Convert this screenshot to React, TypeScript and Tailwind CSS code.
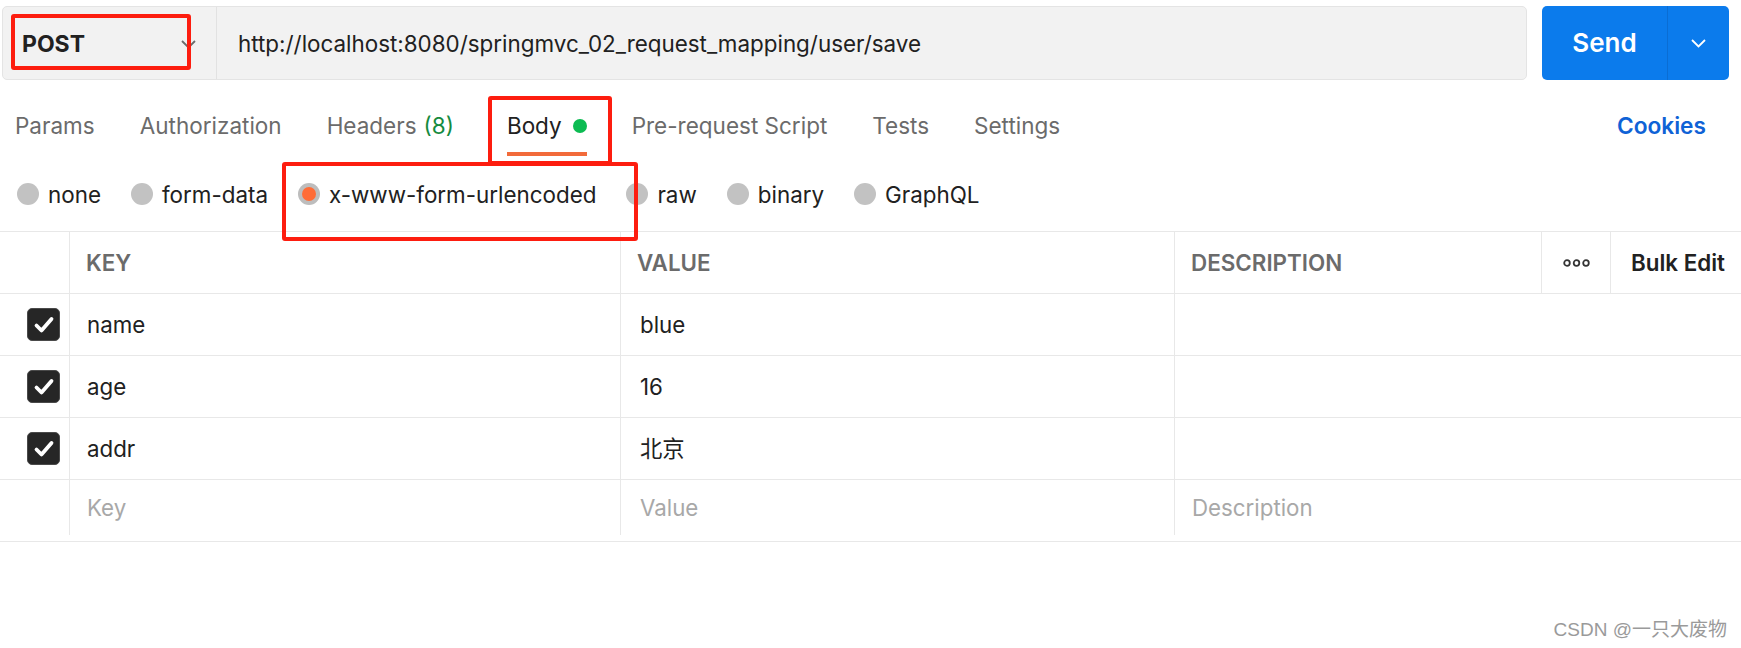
import React from "react";

const tabs = [
  { label: "Params" },
  { label: "Authorization" },
  { label: "Headers", count: "(8)" },
  { label: "Body", active: true },
  { label: "Pre-request Script" },
  { label: "Tests" },
  { label: "Settings" },
];

const bodyTypes = ["none", "form-data", "x-www-form-urlencoded", "raw", "binary", "GraphQL"];

const rows = [
  { key: "name", value: "blue" },
  { key: "age", value: "16" },
  { key: "addr", value: "北京" },
];

function Chevron({ color }: { color: string }) {
  return (
    <svg width="15" height="9" viewBox="0 0 15 9" fill="none">
      <polyline points="1,1 7.5,7.5 14,1" stroke={color} strokeWidth="1.8" />
    </svg>
  );
}

function Checkbox() {
  return (
    <div className="w-[33px] h-[33px] rounded-[5px] bg-[#262626] border border-[#4a4a4a] flex items-center justify-center">
      <svg width="24" height="24" viewBox="0 0 24 24" fill="none">
        <polyline points="4.5,12.5 9.5,17.5 19.5,6" stroke="white" strokeWidth="3.8" strokeLinecap="round" strokeLinejoin="round" />
      </svg>
    </div>
  );
}

function Dots() {
  return (
    <svg width="27" height="8" viewBox="0 0 27 8" fill="none">
      <circle cx="4" cy="4" r="2.8" stroke="#333" strokeWidth="1.8" />
      <circle cx="13.5" cy="4" r="2.8" stroke="#333" strokeWidth="1.8" />
      <circle cx="23" cy="4" r="2.8" stroke="#333" strokeWidth="1.8" />
    </svg>
  );
}

export default function App() {
  return (
    <div className="relative w-[1741px] h-[648px] bg-white overflow-hidden font-['Inter','Noto_Sans_CJK_SC',sans-serif] text-[#212121]">
      {/* request bar */}
      <div className="flex pl-[2px] pr-[12px] pt-[6px] gap-[15px]">
        <div className="flex-1 h-[74px] flex bg-[#f2f2f2] border border-[#e4e4e4] rounded-[5px]">
          <div className="w-[214px] h-full flex items-center justify-between pl-[19px] pr-[20px] pt-[2px] border-r border-[#e2e2e2]">
            <span className="text-[23px] font-bold text-[#212121]">POST</span>
            <Chevron color="#6b6b6b" />
          </div>
          <div className="flex items-center pl-[21px] pt-[2px] text-[22.4px] text-[#212121]">
            http://localhost:8080/springmvc_02_request_mapping/user/save
          </div>
        </div>
        <div className="w-[187px] h-[74px] flex rounded-[5px] bg-[#0b7bec] text-white">
          <div className="w-[126px] flex items-center justify-center pb-[2px] border-r border-[#0a6dd4] text-[26px] font-semibold">
            Send
          </div>
          <div className="flex-1 flex items-center justify-center">
            <Chevron color="white" />
          </div>
        </div>
      </div>

      {/* tabs */}
      <div className="flex items-start h-[80px] pt-[32px] pl-[15px] pr-[35px] gap-[45px]">
        {tabs.map((t) => (
          <div key={t.label} className={`flex flex-col ${t.active ? "ml-[8px]" : ""}`}>
            <div className={`flex items-center h-[28px] text-[22.5px] ${t.active ? "text-[#212121]" : "text-[#6b6b6b]"}`}>
              {t.label}
              {t.count && <span className="ml-[7px] text-[#158b3e]">{t.count}</span>}
              {t.active && <span className="ml-[11px] w-[14px] h-[14px] rounded-full bg-[#0cbb52]" />}
            </div>
            {t.active && <div className="mt-[12px] h-[4px] bg-[#f26b3a]" />}
          </div>
        ))}
        <div className="ml-auto h-[28px] flex items-center text-[22.7px] font-semibold text-[#0f62d6]">Cookies</div>
      </div>

      {/* body types */}
      <div className="h-[71px] pb-[2px] flex items-center pl-[17px] gap-[30px]">
        {bodyTypes.map((b) => {
          const selected = b === "x-www-form-urlencoded";
          return (
            <div key={b} className="flex items-center gap-[9px] text-[22.4px] text-[#212121]">
              {selected ? (
                <span className="w-[22px] h-[22px] rounded-full bg-[#bdbdbd] flex items-center justify-center">
                  <span className="w-[14px] h-[14px] rounded-full bg-[#ff6c37]" />
                </span>
              ) : (
                <span className="w-[22px] h-[22px] rounded-full bg-[#c2c2c2]" />
              )}
              {b}
            </div>
          );
        })}
      </div>

      {/* table */}
      <div className="border-t border-[#e8e8e8]">
        <div className="grid grid-cols-[69px_551px_554px_367px_69px_1fr] h-[62px] border-b border-[#e8e8e8] text-[22.4px] font-semibold text-[#6b6b6b]">
          <div />
          <div className="flex items-center pl-[16px] border-l border-[#e8e8e8]">KEY</div>
          <div className="flex items-center pl-[16px] border-l border-[#e8e8e8]">VALUE</div>
          <div className="flex items-center pl-[16px] border-l border-[#e8e8e8]">DESCRIPTION</div>
          <div className="flex items-center justify-center border-l border-[#e8e8e8]">
            <Dots />
          </div>
          <div className="flex items-center pl-[20px] border-l border-[#e8e8e8] text-[#212121]">Bulk Edit</div>
        </div>
        {rows.map((r) => (
          <div key={r.key} className="grid grid-cols-[69px_551px_554px_1fr] h-[62px] border-b border-[#e8e8e8] text-[22.3px] text-[#212121]">
            <div className="flex items-center pl-[27px]">
              <Checkbox />
            </div>
            <div className="flex items-center pl-[17px] border-l border-[#e8e8e8]">{r.key}</div>
            <div className="flex items-center pl-[19px] border-l border-[#e8e8e8]">{r.value}</div>
            <div className="border-l border-[#e8e8e8]" />
          </div>
        ))}
        <div className="grid grid-cols-[69px_551px_554px_1fr] h-[62px] pb-[6px] border-b border-[#e8e8e8] text-[22.3px] text-[#a8a8a8]">
          <div />
          <div className="flex items-center pl-[17px] border-l border-[#e8e8e8]">Key</div>
          <div className="flex items-center pl-[19px] border-l border-[#e8e8e8]">Value</div>
          <div className="flex items-center pl-[17px] border-l border-[#e8e8e8]">Description</div>
        </div>
      </div>

      {/* annotation boxes */}
      <div className="absolute left-[11px] top-[14px] w-[180px] h-[56px] border-[4px] border-[#fd1d0f] rounded-[3px]" />
      <div className="absolute left-[488px] top-[96px] w-[124px] h-[69px] border-[4px] border-[#fd1d0f] rounded-[3px]" />
      <div className="absolute left-[282px] top-[162px] w-[356px] h-[79px] border-[4px] border-[#fd1d0f] rounded-[3px]" />

      {/* watermark */}
      <div className="absolute right-[14px] bottom-[4px] text-[19px] text-[#9a9a9a] font-['Liberation_Sans','Noto_Sans_CJK_SC',sans-serif]">
        CSDN @一只大废物
      </div>
    </div>
  );
}
